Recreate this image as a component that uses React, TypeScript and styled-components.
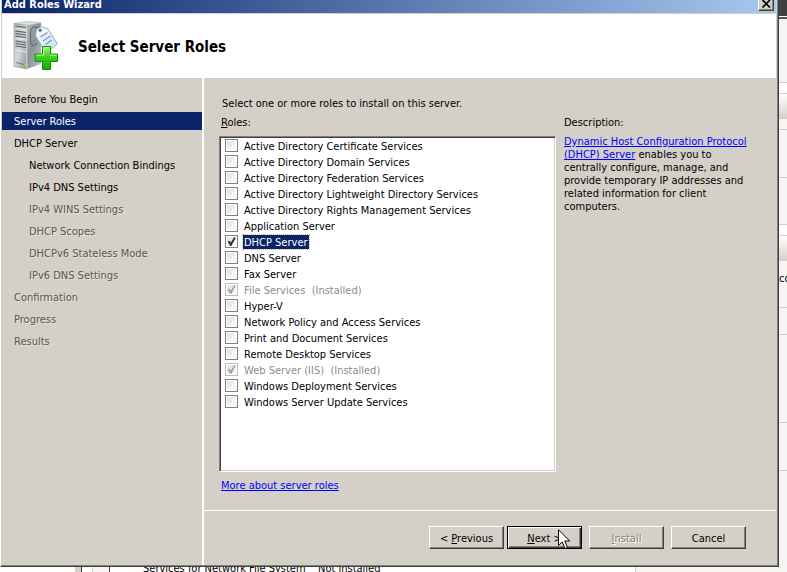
import React from 'react';
import styled, { createGlobalStyle, css } from 'styled-components';

const face = '#d4d0c8';
const navy = '#0a246a';

const GlobalStyle = createGlobalStyle`
  *, *::before, *::after { box-sizing: border-box; }
  body {
    margin: 0;
    color: #000;
    background: #f6f5f4;
    font: 11px/14px "DejaVu Sans Condensed", "Noto Sans", sans-serif;
  }
`;

const Desktop = styled.div`
  display: grid;
  grid-template-columns: minmax(0, 1fr) 8px;
  grid-template-rows: 1fr 5px;
  height: 100vh;
  min-height: 480px;
  overflow: hidden;
`;

const Dialog = styled.section`
  display: flex;
  flex-direction: column;
  min-width: 0;
  background: ${face};
  border-left: 1px solid #fff;
  border-right: 1px solid #404040;
  border-bottom: 1px solid #404040;
  box-shadow: inset -1px -1px 0 #808080;
  padding: 0 2px 1px 1px;
`;

const TitleBar = styled.header`
  display: flex;
  justify-content: space-between;
  align-items: flex-start;
  height: 13px;
  margin-bottom: 1px;
  padding: 0 2px;
  overflow: hidden;
  color: #fff;
  font-weight: 700;
  line-height: 9px;
  background: linear-gradient(90deg, ${navy}, #a6caf0);
`;

const CloseButton = styled.button`
  display: flex;
  align-items: flex-start;
  justify-content: center;
  width: 16px;
  height: 11px;
  padding: 0;
  background: ${face};
  border: solid;
  border-width: 0 1px 1px;
  border-color: #fff #404040 #404040 #fff;
  box-shadow: inset -1px -1px 0 #808080;
`;

const Banner = styled.div`
  display: flex;
  align-items: center;
  gap: 18px;
  height: 64px;
  padding-left: 10px;
  background: #fff;
`;

const Heading = styled.h1`
  margin: 0;
  padding-top: 2px;
  font-size: 15px;
  line-height: 20px;
`;

const Body = styled.div`
  display: flex;
  flex: 1;
  min-height: 0;
`;

const Steps = styled.nav`
  display: flex;
  flex-direction: column;
  gap: 4px;
  flex: 0 0 202px;
  padding-top: 12px;
  border-right: 2px solid #fff;
`;

const Step = styled.a<{ $sub?: boolean; $state?: 'current' | 'disabled' }>`
  display: block;
  padding: 3px 0 1px ${p => (p.$sub ? 27 : 12)}px;
  color: #000;
  text-decoration: none;
  white-space: nowrap;
  ${p => p.$state === 'current' && css`
    color: #fff;
    background: ${navy};
  `}
  ${p => p.$state === 'disabled' && css`
    color: #5a574f;
    text-shadow: 1px 1px 0 #e4e0d8;
  `}
`;

const Page = styled.main`
  display: flex;
  flex-direction: column;
  flex: 1;
  min-width: 0;
`;

const Content = styled.div`
  display: flex;
  flex-direction: column;
  flex: 1;
  min-height: 0;
  padding: 19px 14px 17px 15px;
  border-bottom: 1px solid #fff;
`;

const Intro = styled.p`
  margin: 0 0 5px;
  padding-left: 3px;
`;

const Columns = styled.div`
  display: grid;
  grid-template-columns: minmax(0, 337fr) minmax(0, 198fr);
  column-gap: 8px;
  flex: 1;
  min-height: 0;
`;

const RolesColumn = styled.div`
  display: flex;
  flex-direction: column;
  min-height: 0;
`;

const Caption = styled.div`
  padding-left: 2px;
  margin-bottom: 6px;
`;

const RoleList = styled.ul`
  flex: 1;
  min-height: 0;
  margin: 0 0 7px;
  padding: 1px 5px;
  overflow: hidden;
  list-style: none;
  background: #fff;
  border: 1px solid;
  border-color: #808080 #fff #fff #808080;
  box-shadow: inset 1px 1px 0 #404040, inset -1px -1px 0 ${face};
`;

const RoleRow = styled.label`
  display: flex;
  align-items: flex-start;
  gap: 5px;
  height: 16px;
  padding-top: 1px;
  white-space: pre;
`;

const Tick = styled.input`
  appearance: none;
  position: relative;
  flex: none;
  width: 13px;
  height: 13px;
  margin: 0;
  border: 1px solid #7f8080;
  background: linear-gradient(135deg, #e8e8e8 50%, #f8f8f8 50%) content-box, #fff;
  padding: 1px;
  &:checked::before {
    content: '';
    position: absolute;
    inset: 1px;
    background: #303030;
    clip-path: polygon(8% 48%, 26% 42%, 42% 62%, 80% 2%, 98% 8%, 48% 100%, 34% 100%);
  }
  &:disabled { border-color: #bcbcbc; }
  &:disabled::before { background: #a4a4a4; }
`;

const RoleName = styled.span<{ $selected?: boolean; $installed?: boolean }>`
  padding: 2px 1px 0;
  line-height: 12px;
  color: ${p => (p.$selected ? '#fff' : p.$installed ? '#8c8c8c' : '#000')};
  ${p => p.$selected && css`
    background: ${navy};
    outline: 1px dotted #d8b060;
  `}
`;

const Description = styled.div`
  min-width: 0;
  padding-right: 8px;
  line-height: 13px;
`;

const DescriptionTitle = styled.div`
  margin-bottom: 5px;
  line-height: 14px;
`;

const Link = styled.a`
  color: #0000ff;
  text-decoration: underline;
`;

const MoreLink = styled(Link)`
  align-self: flex-start;
  margin-left: 2px;
`;

const Actions = styled.footer`
  display: flex;
  justify-content: flex-end;
  gap: 7px;
  padding: 15px 30px 16px 0;
`;

const ActionButton = styled.button<{ $primary?: boolean }>`
  position: relative;
  width: 75px;
  height: 23px;
  padding: 2px 0 0;
  font: inherit;
  color: #000;
  background: ${face};
  border: 1px solid;
  border-color: #fff #404040 #404040 #fff;
  box-shadow: inset -1px -1px 0 #808080;
  &:disabled {
    color: #87847c;
    text-shadow: 1px 1px 0 #fff;
  }
  ${p => p.$primary && css`
    border-color: #000;
    box-shadow: inset 1px 1px 0 #fff, inset -1px -1px 0 #404040, inset -2px -2px 0 #808080;
  `}
`;

const NavGroup = styled.div`
  display: flex;
  gap: 3px;
`;

const Pointer = styled.svg`
  position: absolute;
  left: 50px;
  top: 2px;
`;

const SideStrip = styled.div`
  display: flex;
  flex-direction: column;
  overflow: hidden;
  background: #f6f5f4;
`;

const Band = styled.div<{ $h?: number; $kind?: 'dark' | 'white' | 'fade' }>`
  flex: ${p => (p.$h ? `0 0 ${p.$h}px` : '1')};
  border-bottom: ${p => (p.$kind === 'dark' || p.$kind === 'fade' || !p.$h ? '0' : '1px solid #cfcfcf')};
  background: ${p =>
    p.$kind === 'dark' ? '#404040'
    : p.$kind === 'white' ? '#fff'
    : p.$kind === 'fade' ? `linear-gradient(#fff, ${face})`
    : 'transparent'};
  line-height: 36px;
`;

const Rule = styled.div`
  flex: 0 0 3px;
  background: linear-gradient(#fff 1px, #6a6a6a 1px, #404040);
`;

const BottomStrip = styled.div`
  grid-column: 1 / -1;
  display: flex;
  align-items: flex-end;
  overflow: hidden;
  background: #fff;
`;

const Gutter = styled.div<{ $w: number; $edge: string; $fill?: string }>`
  flex: 0 0 ${p => p.$w}px;
  align-self: stretch;
  border-right: 1px solid ${p => p.$edge};
  background: ${p => p.$fill ?? '#fff'};
`;

const Services = styled.div`
  display: grid;
  grid-template-columns: 175px 1fr;
  flex: 1;
  padding-left: 33px;
  line-height: 7px;
  white-space: nowrap;
`;

const Backdrop = styled.div`
  flex: 0 0 152px;
  align-self: stretch;
  background: #f6f5f4;
  border-left: 1px solid #cfcfcf;
`;

const Key = styled.u`
  text-underline-offset: 1px;
`;

function ServerIcon() {
  return (
    <svg width="48" height="52" viewBox="0 0 48 52" aria-hidden="true">
      <defs>
        <linearGradient id="front" x1="0" y1="0" x2="1" y2="1">
          <stop offset="0" stopColor="#b4b8ba" />
          <stop offset="0.5" stopColor="#d3d6d8" />
          <stop offset="1" stopColor="#8c9194" />
        </linearGradient>
        <linearGradient id="side" x1="0" y1="0" x2="1" y2="1">
          <stop offset="0" stopColor="#b4b8ba" />
          <stop offset="0.45" stopColor="#8b9093" />
          <stop offset="1" stopColor="#c4c7c9" />
        </linearGradient>
        <linearGradient id="tag" x1="0" y1="0" x2="1" y2="1">
          <stop offset="0" stopColor="#ffffff" />
          <stop offset="1" stopColor="#c3dcf0" />
        </linearGradient>
        <linearGradient id="plus" x1="0" y1="0" x2="0" y2="1">
          <stop offset="0" stopColor="#9cf56a" />
          <stop offset="0.5" stopColor="#35cf20" />
          <stop offset="1" stopColor="#14a80c" />
        </linearGradient>
      </defs>
      <path d="M2 3.5 L17 1.5 L29 3 L15 5.5Z" fill="#dfe2e3" stroke="#9a9ea0" strokeWidth=".5" />
      <path d="M15 5.5 L29 3 V44 L15 49Z" fill="url(#side)" />
      <path d="M2 3.5 L15 5.5 V49 L2 46.5Z" fill="url(#front)" stroke="#85898b" strokeWidth=".5" />
      <g stroke="#565b5e" strokeWidth="1.1">
        <path d="M3.5 6 L14 7.5M3.5 11 L14 12.5M3.5 13.5 L14 15M3.5 16 L14 17.5M3.5 21 L14 22.5M3.5 23.5 L14 25M3.5 26 L14 27.5" />
      </g>
      <g stroke="#eef0f1" strokeWidth=".8">
        <path d="M3 8.5 L14 10M3 18.5 L14 20M3 30 L14 31.8" />
      </g>
      <path d="M14.8 5.5V49" stroke="#edefef" strokeWidth=".8" />
      <path d="M4 42.5 L12 44.5" stroke="#5e6366" strokeWidth=".8" />
      <rect x="11.5" y="44.3" width="2.5" height="2.2" fill="#6fe52a" />
      <path d="M27 9 C22 4 18.5 8 18.5 14 V20 C18.5 26 23 27 25 23" fill="none" stroke="#63686b" strokeWidth="1.1" />
      <path d="M24.5 9.5 L29 6.5 L36 9 L45.5 24 L34 32.5 L23.5 16Z" fill="url(#tag)" stroke="#83a6c4" strokeWidth=".9" />
      <circle cx="28.2" cy="10.3" r="1.7" fill="#697984" />
      <path d="M28.5 17 L35.5 12.5M31 21 L38.5 16M33.5 24.500 L40 20" stroke="#6f96c0" strokeWidth="1.1" />
      <path d="M30.5 26.500 H38.5 V34 H45.500 V41.500 H38.500 V49.500 H30.500 V41.500 H23 V34 H30.500Z" fill="url(#plus)" stroke="#128d0d" />
      <path d="M31.7 27.700 H37.300 M24.200 35.200 H31.700 V28 M38.500 35.200 H44.500" fill="none" stroke="#c5ffa4" strokeWidth=".8" />
    </svg>
  );
}

const steps: { text: string; sub?: boolean; state?: 'current' | 'disabled' }[] = [
  { text: 'Before You Begin' },
  { text: 'Server Roles', state: 'current' },
  { text: 'DHCP Server' },
  { text: 'Network Connection Bindings', sub: true },
  { text: 'IPv4 DNS Settings', sub: true },
  { text: 'IPv4 WINS Settings', sub: true, state: 'disabled' },
  { text: 'DHCP Scopes', sub: true, state: 'disabled' },
  { text: 'DHCPv6 Stateless Mode', sub: true, state: 'disabled' },
  { text: 'IPv6 DNS Settings', sub: true, state: 'disabled' },
  { text: 'Confirmation', state: 'disabled' },
  { text: 'Progress', state: 'disabled' },
  { text: 'Results', state: 'disabled' },
];

const roles: { name: string; selected?: boolean; installed?: boolean }[] = [
  { name: 'Active Directory Certificate Services' },
  { name: 'Active Directory Domain Services' },
  { name: 'Active Directory Federation Services' },
  { name: 'Active Directory Lightweight Directory Services' },
  { name: 'Active Directory Rights Management Services' },
  { name: 'Application Server' },
  { name: 'DHCP Server', selected: true },
  { name: 'DNS Server' },
  { name: 'Fax Server' },
  { name: 'File Services  (Installed)', installed: true },
  { name: 'Hyper-V' },
  { name: 'Network Policy and Access Services' },
  { name: 'Print and Document Services' },
  { name: 'Remote Desktop Services' },
  { name: 'Web Server (IIS)  (Installed)', installed: true },
  { name: 'Windows Deployment Services' },
  { name: 'Windows Server Update Services' },
];

export default function App() {
  return (
    <>
      <GlobalStyle />
      <Desktop>
        <Dialog aria-label="Add Roles Wizard">
          <TitleBar>
            <span>Add Roles Wizard</span>
            <CloseButton aria-label="Close">
              <svg width="9" height="8" viewBox="0 0 9 8" aria-hidden="true">
                <path d="M0.5 0 L8 7.5 M8 0 L0.5 7.5" stroke="#000" strokeWidth="1.7" />
              </svg>
            </CloseButton>
          </TitleBar>
          <Banner>
            <ServerIcon />
            <Heading>Select Server Roles</Heading>
          </Banner>
          <Body>
            <Steps aria-label="Wizard steps">
              {steps.map(s => (
                <Step
                  key={s.text}
                  href={s.state === 'disabled' ? undefined : '#'}
                  aria-disabled={s.state === 'disabled'}
                  aria-current={s.state === 'current' ? 'step' : undefined}
                  $sub={s.sub}
                  $state={s.state}
                >
                  {s.text}
                </Step>
              ))}
            </Steps>
            <Page>
              <Content>
                <Intro>Select one or more roles to install on this server.</Intro>
                <Columns>
                  <RolesColumn>
                    <Caption id="roles-caption"><Key>R</Key>oles:</Caption>
                    <RoleList aria-labelledby="roles-caption">
                      {roles.map(r => (
                        <li key={r.name}>
                          <RoleRow>
                            <Tick
                              type="checkbox"
                              defaultChecked={r.selected || r.installed}
                              disabled={r.installed}
                            />
                            <RoleName $selected={r.selected} $installed={r.installed}>{r.name}</RoleName>
                          </RoleRow>
                        </li>
                      ))}
                    </RoleList>
                    <MoreLink href="#">More about server roles</MoreLink>
                  </RolesColumn>
                  <Description>
                    <DescriptionTitle>Description:</DescriptionTitle>
                    <Link href="#">Dynamic Host Configuration Protocol (DHCP) Server</Link>{' '}
                    enables you to centrally configure, manage, and provide temporary IP addresses
                    and related information for client computers.
                  </Description>
                </Columns>
              </Content>
              <Actions>
                <NavGroup>
                  <ActionButton>&lt; <Key>P</Key>revious</ActionButton>
                  <ActionButton $primary>
                    <Key>N</Key>ext &gt;
                    <Pointer width="13" height="21" viewBox="0 0 13 21" aria-hidden="true">
                      <path
                        d="M0.5 0.8 V16.5 L4.2 13 L7 19.5 L9.5 18.5 L6.8 12 H11.7Z"
                        fill="#fff"
                        stroke="#000"
                      />
                    </Pointer>
                  </ActionButton>
                </NavGroup>
                <ActionButton disabled><Key>I</Key>nstall</ActionButton>
                <ActionButton>Cancel</ActionButton>
              </Actions>
            </Page>
          </Body>
        </Dialog>
        <SideStrip>
          <Band $h={16} $kind="dark" />
          <Rule />
          <Band $h={64} />
          <Band $h={11} $kind="white" />
          <Band $h={25} $kind="fade" />
          <Band $h={11} />
          <Band $h={48} />
          <Band $h={47} />
          <Band $h={11} $kind="white" />
          <Band $h={25} $kind="fade" />
          <Band $h={47}>co</Band>
          <Band $h={27} />
          <Band $h={88} />
          <Band $h={48} />
          <Band />
        </SideStrip>
        <BottomStrip>
          <Gutter $w={76} $edge="#cfcfcf" />
          <Gutter $w={6} $edge="#404040" $fill={face} />
          <Gutter $w={11} $edge="#cfcfcf" />
          <Gutter $w={17} $edge="#404040" $fill="#f6f5f4" />
          <Services>
            <span>Services for Network File System</span>
            <span>Not installed</span>
          </Services>
          <Backdrop />
        </BottomStrip>
      </Desktop>
    </>
  );
}
